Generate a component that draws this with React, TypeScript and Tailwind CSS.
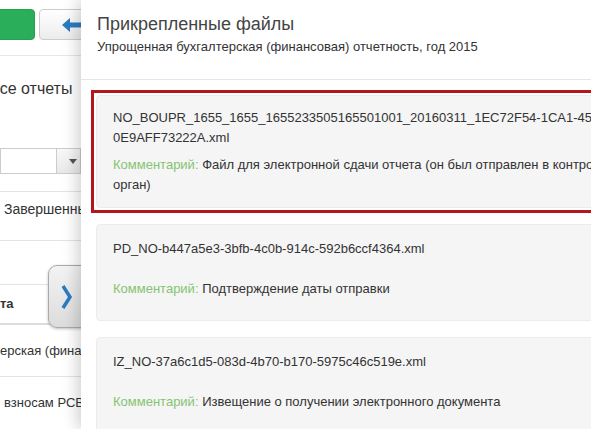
import React from "react";

const font = { fontFamily: '"Liberation Sans", Arial, sans-serif' };

function Card({
  name,
  comment,
  pt,
  gap,
  pb,
  mb,
}: {
  name: React.ReactNode;
  comment: React.ReactNode;
  pt: string;
  gap: string;
  pb: string;
  mb: string;
}) {
  return (
    <div
      className={
        "rounded-[4px] border border-[#ececec] bg-[#f5f5f5] px-[16px] text-[13px] leading-[20px] text-[#333] " +
        pt +
        " " +
        pb +
        " " +
        mb
      }
    >
      <div className="whitespace-nowrap">{name}</div>
      <div className={"whitespace-nowrap " + gap}>
        <span className="text-[#84c472]">Комментарий:</span> {comment}
      </div>
    </div>
  );
}

export default function App() {
  return (
    <div className="relative h-[429px] w-[591px] overflow-hidden bg-white text-[#333]" style={font}>
      {/* background page */}
      <div className="w-[300px]">
        <div className="flex gap-[4px] border-b border-[#e6e6e6] pt-[9px] pb-[15px]">
          <div className="-ml-[10px] h-[31px] w-[45px] rounded-[4px] border border-[#24a150] bg-[#2aae59]" />
          <div className="relative h-[31px] w-[80px] rounded-[4px] border border-[#cccccc] bg-gradient-to-b from-white to-[#ececec]">
            <svg className="absolute left-[22px] top-[8px]" width="22" height="14" viewBox="0 0 22 14">
              <path d="M0 7 L8 0 L8 4.5 L22 4.5 L22 9.5 L8 9.5 L8 14 Z" fill="#2b7bc0" />
            </svg>
          </div>
        </div>
        <div className="mt-[21px] -ml-[11px] whitespace-nowrap text-[16px] leading-[24px] text-[#333]">Все отчеты</div>
        <div className="mt-[47px] flex h-[26px] w-[81px] border border-[#cccccc]">
          <div className="w-[56px] border-r border-[#cccccc] bg-white" />
          <div className="flex flex-1 items-center justify-center bg-gradient-to-b from-[#f8f8f8] to-[#e8e8e8] pl-[8px]">
            <svg width="8" height="5" viewBox="0 0 8 5">
              <path d="M0 0 L8 0 L4 5 Z" fill="#555" />
            </svg>
          </div>
        </div>
        <div className="mt-[17px] h-[50px] border-t border-b border-[#e3e3e3] pt-[7px] pl-[4px] text-[14px] leading-[20px] whitespace-nowrap">
          Завершенные
        </div>
        <div className="h-[44px] border-b border-[#e3e3e3]" />
        <div className="flex h-[40px] items-center border-b-2 border-[#dddddd] text-[13px] font-bold whitespace-nowrap">
          та
        </div>
        <div className="flex h-[52px] items-center border-b border-[#e3e3e3] text-[13px] whitespace-nowrap">
          ерская (финансовая) отчетность
        </div>
        <div className="flex h-[52px] items-center pl-[4px] text-[13px] whitespace-nowrap">
          взносам РСВ-1
        </div>
      </div>

      {/* drawer toggle tab */}
      <div className="absolute left-[48px] top-[265px] h-[63px] w-[45px] rounded-l-[9px] border border-[#aaaaaa] bg-gradient-to-b from-[#f3f3f3] to-[#dcdcdc] shadow-[0_1px_3px_rgba(0,0,0,0.25)]">
        <svg className="absolute left-[12px] top-[19px]" width="12" height="24" viewBox="0 0 12 24">
          <path d="M2 1 L9 12 L2 23" fill="none" stroke="#2b7bc0" strokeWidth="3.5" strokeLinejoin="miter" />
        </svg>
      </div>

      {/* drawer panel */}
      <div className="absolute left-[81px] top-0 h-full w-[640px] bg-white shadow-[-4px_0_14px_rgba(0,0,0,0.18)]">
        <div className="h-[80px] border-b border-[#e5e5e5] px-[16px] pt-[12px]">
          <div className="text-[18px] leading-[24px] text-[#444]">Прикрепленные файлы</div>
          <div className="mt-[2px] text-[13px] leading-[18px] text-[#333]">
            Упрощенная бухгалтерская (финансовая) отчетность, год 2015
          </div>
        </div>
        <div className="px-[15px] pt-[15px]">
          <div className="-mx-[5px] -mt-[5px] mb-[11px] border-[3px] border-[#b3161b] p-[2px]">
            <Card
              pt="pt-[12px]"
              gap="mt-[7px]"
              pb="pb-[12px]"
              mb="mb-0"
              name={
                <>
                  NO_BOUPR_1655_1655_1655233505165501001_20160311_1EC72F54-1CA1-45E2-9B4C-
                  <br />
                  0E9AFF73222A.xml
                </>
              }
              comment={
                <>
                  Файл для электронной сдачи отчета (он был отправлен в контролирующий
                  <br />
                  орган)
                </>
              }
            />
          </div>
          <Card
            pt="pt-[14px]"
            gap="mt-[20px]"
            pb="pb-[21px]"
            mb="mb-[16px]"
            name="PD_NO-b447a5e3-3bfb-4c0b-914c-592b6ccf4364.xml"
            comment="Подтверждение даты отправки"
          />
          <Card
            pt="pt-[14px]"
            gap="mt-[20px]"
            pb="pb-[21px]"
            mb="mb-[16px]"
            name="IZ_NO-37a6c1d5-083d-4b70-b170-5975c46c519e.xml"
            comment="Извещение о получении электронного документа"
          />
        </div>
      </div>
    </div>
  );
}
